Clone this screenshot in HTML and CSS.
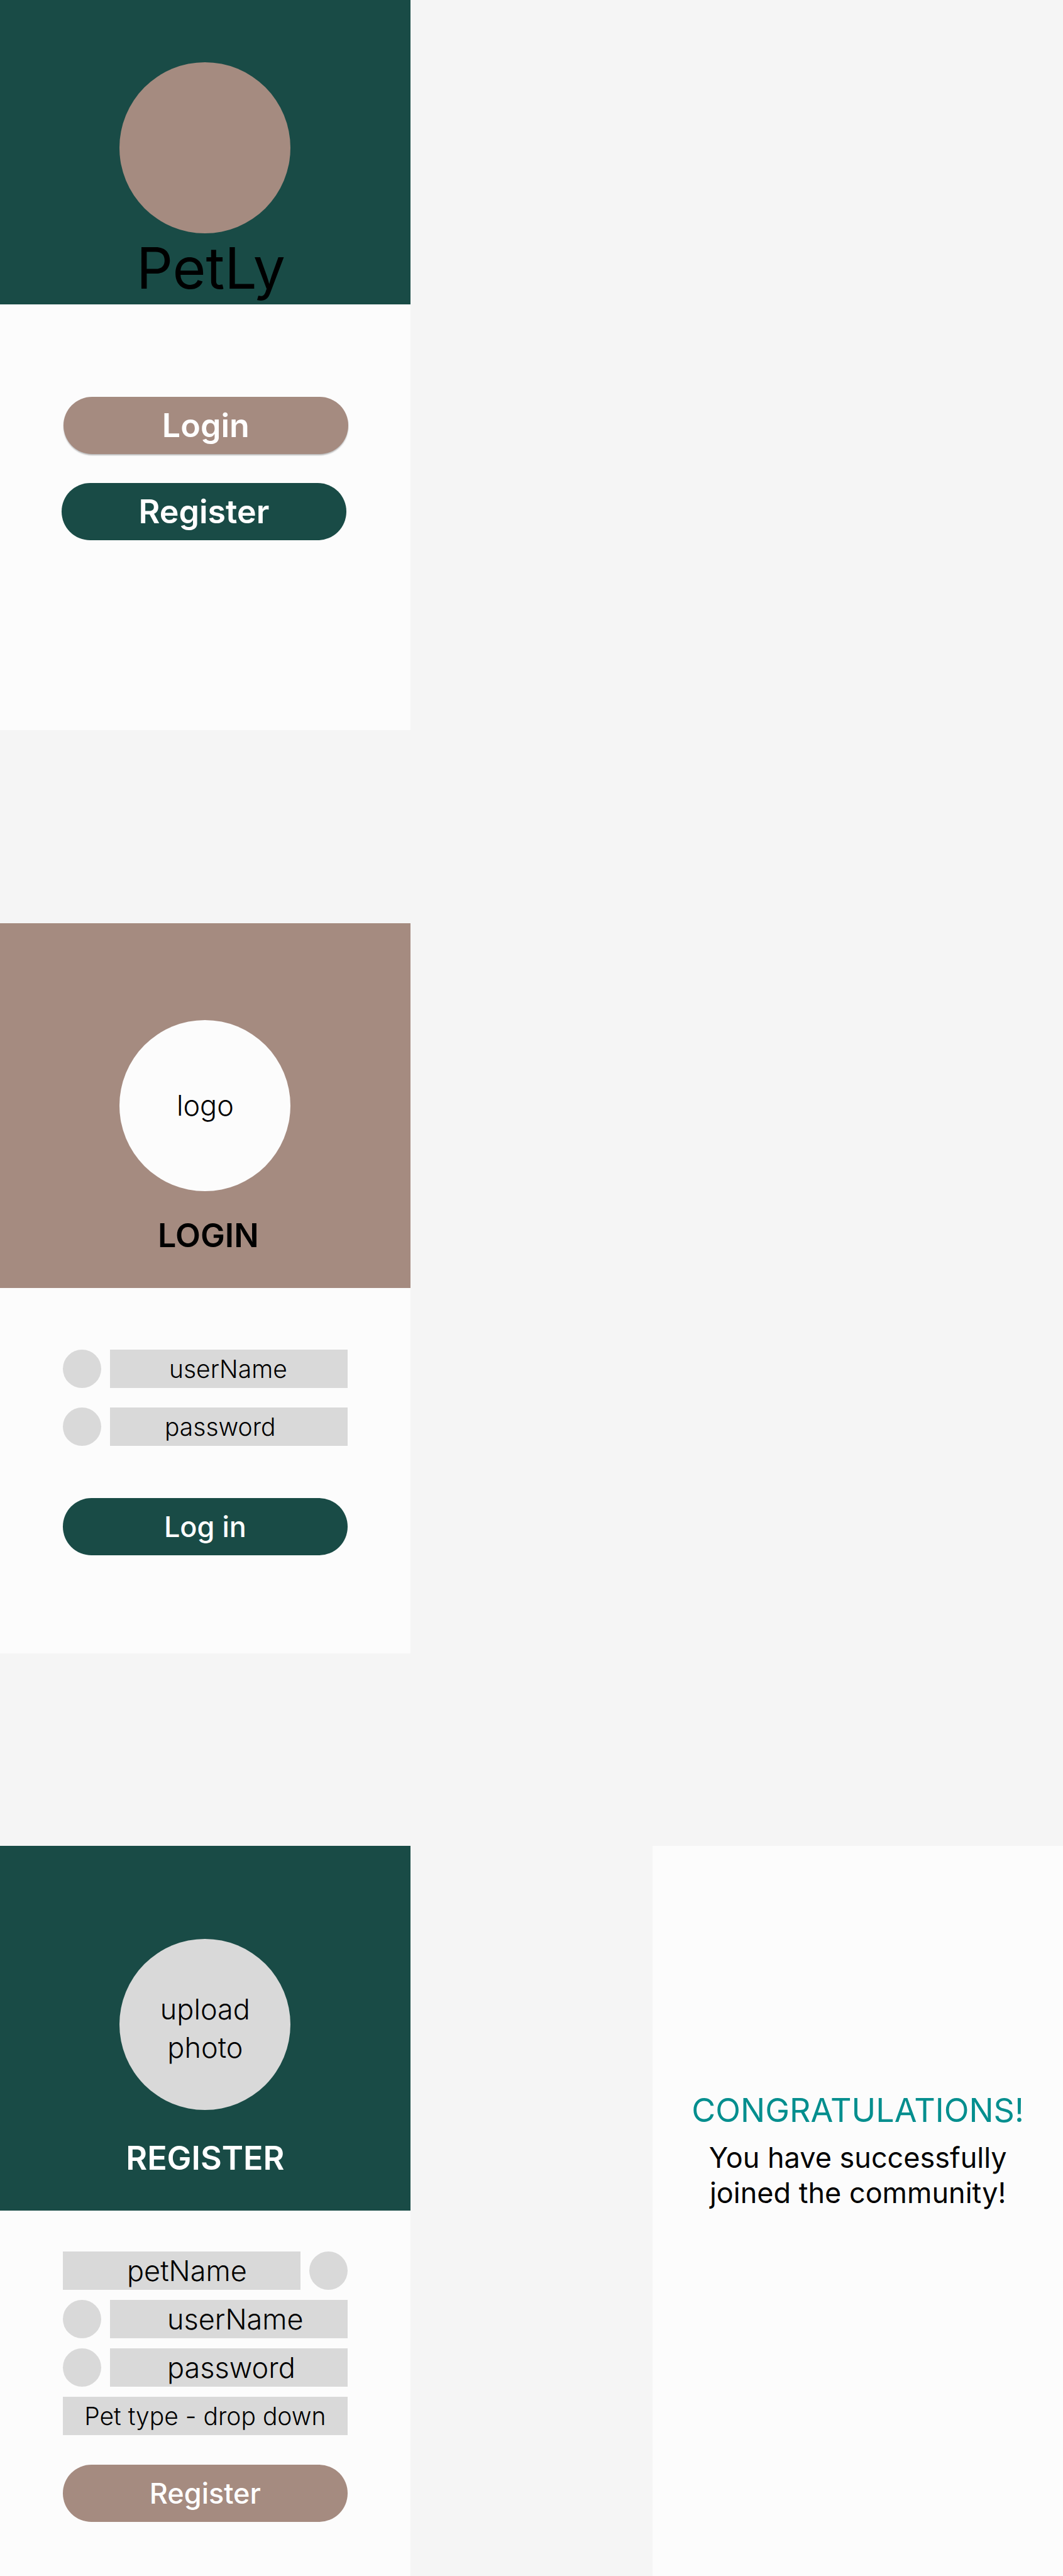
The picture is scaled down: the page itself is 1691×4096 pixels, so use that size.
FILE: index.html
```html
<!DOCTYPE html>
<html lang="en">
<head>
  <meta charset="utf-8">
  <meta name="viewport" content="width=device-width, initial-scale=1">
  <title>PetLy</title>
  <link rel="stylesheet" href="styles.css">
</head>
<body>
  <main class="board">
    <section class="screen screen-welcome">
      <header class="hero hero-welcome green">
        <div class="disc brown"></div>
        <h1 class="brand">PetLy</h1>
      </header>
      <div class="welcome-actions">
        <button class="pill pill-strong pill-raised brown" type="button">Login</button>
        <button class="pill pill-strong green" type="button">Register</button>
      </div>
    </section>

    <section class="screen screen-login">
      <header class="hero hero-login brown">
        <div class="disc white">logo</div>
        <h2 class="title title-dark">LOGIN</h2>
      </header>
      <form class="form form-login">
        <div class="row">
          <span class="dot"></span>
          <input class="field field-small" type="text" placeholder="userName" aria-label="User name">
        </div>
        <div class="row">
          <span class="dot"></span>
          <input class="field field-small field-secret" type="password" placeholder="password" aria-label="Password">
        </div>
        <button class="pill green" type="button">Log in</button>
      </form>
    </section>

    <section class="screen screen-register">
      <header class="hero hero-register green">
        <button class="disc disc-upload grey" type="button">upload<br>photo</button>
        <h2 class="title title-light">REGISTER</h2>
      </header>
      <form class="form form-register">
        <div class="row">
          <input class="field field-pet" type="text" placeholder="petName" aria-label="Pet name">
          <span class="dot"></span>
        </div>
        <div class="row">
          <span class="dot"></span>
          <input class="field" type="text" placeholder="userName" aria-label="User name">
        </div>
        <div class="row">
          <span class="dot"></span>
          <input class="field" type="password" placeholder="password" aria-label="Password">
        </div>
        <div class="row">
          <select class="field field-small field-select" aria-label="Pet type">
            <option>Pet type - drop down</option>
          </select>
        </div>
        <button class="pill brown" type="button">Register</button>
      </form>
    </section>

    <section class="screen screen-done">
      <h2 class="done-title">CONGRATULATIONS!</h2>
      <p class="done-text">You have successfully<br>joined the community!</p>
    </section>
  </main>
</body>
</html>
```
FILE: styles.css
```css
:root {
  --green: #194b46;
  --brown: #a58b80;
  --grey: #d9d9d9;
  --white: #fcfcfc;
  --teal: #038e8e;
}

* {
  box-sizing: border-box;
}

body {
  margin: 0;
  background: #f5f5f5;
  color: #000;
  font-family: Inter, "Liberation Sans", sans-serif;
}

h1,
h2,
p {
  margin: 0;
}

button,
input,
select {
  font: inherit;
  color: inherit;
  border: 0;
  border-radius: 0;
  margin: 0;
}

.green { background: var(--green); }
.brown { background: var(--brown); }
.grey { background: var(--grey); }
.white { background: var(--white); }

/* Screens sit on a board with two columns and a wide empty gutter */
.board {
  display: grid;
  grid-template-columns: 38.6% minmax(0, 1fr) 38.6%;
  row-gap: 306px;
  align-content: space-between;
  min-height: 100vh;
}

.screen {
  grid-column: 1;
  min-width: 0;
  min-height: 1161px;
  background: var(--white);
}

.screen-register,
.screen-done {
  grid-row: 3;
}

.screen-done {
  grid-column: 3;
}

/* Coloured top part of a screen */
.hero {
  display: flex;
  flex-direction: column;
  align-items: center;
}

.hero-welcome {
  height: 484px;
  padding-top: 99px;
}

.hero-login,
.hero-register {
  height: 580px;
  padding-bottom: 53px;
  justify-content: flex-end;
  gap: 41px;
}

.hero-register {
  gap: 47px;
}

.disc {
  display: flex;
  flex: none;
  align-items: center;
  justify-content: center;
  width: 272px;
  height: 272px;
  border-radius: 50%;
  font-size: 45px;
  font-weight: 300;
  line-height: 61px;
}

.disc-upload {
  padding: 11px 0 0;
}

.brand {
  padding-left: 18px;
  font-size: 91px;
  font-weight: 400;
  line-height: 110px;
}

.title {
  font-size: 52px;
  font-weight: 600;
  line-height: 60px;
}

.title-dark {
  padding-left: 10px;
}

.title-light {
  color: #fff;
}

/* Buttons */
.pill {
  width: 100%;
  height: 91px;
  padding: 0;
  border-radius: 46px;
  color: #fff;
  font-size: 45px;
  font-weight: 500;
}

.pill-strong {
  width: calc(100% - 3px);
  font-size: 52px;
  font-weight: 600;
}

.pill-raised {
  align-self: flex-end;
  box-shadow: 0 2px 2px rgba(0, 0, 0, 0.25);
}

.welcome-actions {
  display: flex;
  flex-direction: column;
  gap: 46px;
  padding: 147px 99px 0 98px;
}

/* Forms */
.form {
  display: flex;
  flex-direction: column;
  padding: 0 100px;
}

.form-login {
  gap: 31px;
  padding-top: 98px;
}

.form-login .pill {
  margin-top: 52px;
}

.form-register {
  gap: 16px;
  padding-top: 65px;
}

.form-register .pill {
  margin-top: 31px;
}

.row {
  display: flex;
  gap: 14px;
}

.dot {
  flex: none;
  width: 61px;
  height: 61px;
  border-radius: 50%;
  background: var(--grey);
}

.field {
  flex: 1;
  min-width: 0;
  height: 61px;
  padding: 0 0 0 91px;
  background: var(--grey);
  font-size: 45px;
  font-weight: 300;
}

.field::placeholder {
  color: #000;
  opacity: 1;
}

.field-small {
  padding-left: 94px;
  font-size: 39px;
}

.field-secret {
  padding-left: 87px;
}

.field-pet {
  padding-left: 102px;
}

.field-select {
  padding: 0;
  appearance: none;
  text-align: center;
  text-align-last: center;
}

/* Confirmation */
.screen-done {
  padding-top: 391px;
  text-align: center;
}

.done-title {
  margin-bottom: 17px;
  color: var(--teal);
  font-size: 52px;
  font-weight: 400;
  line-height: 60px;
}

.done-text {
  font-size: 45px;
  line-height: 56px;
}
```
